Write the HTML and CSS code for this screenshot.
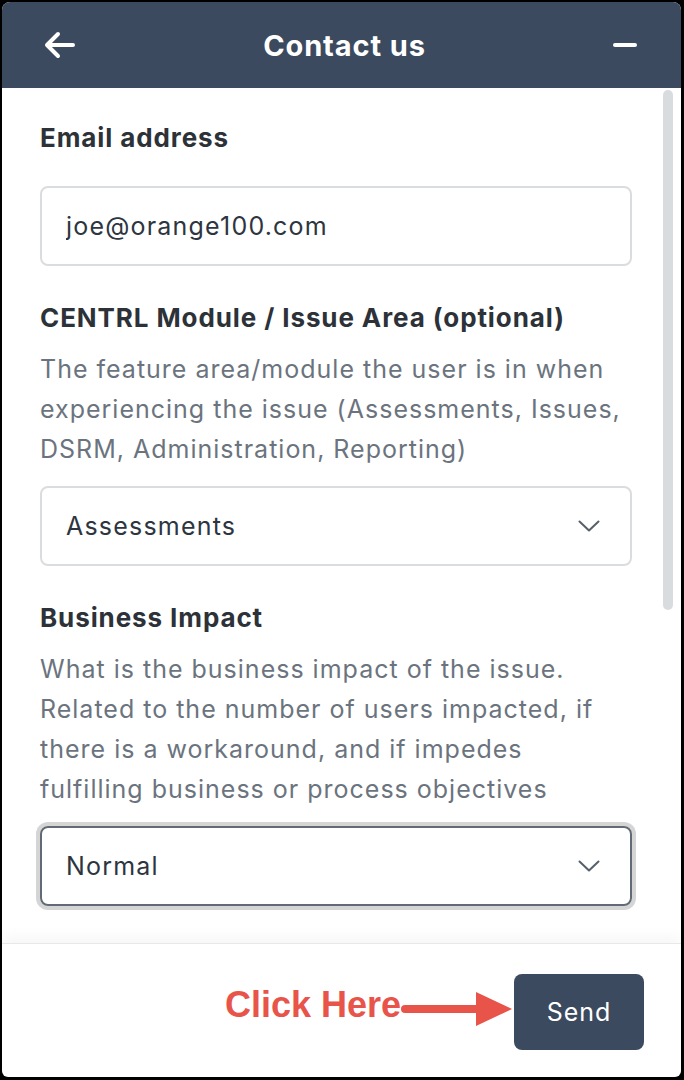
FILE: index.html
```html
<!DOCTYPE html>
<html lang="en">
<head>
    <meta charset="UTF-8">
    <meta name="viewport" content="width=device-width, initial-scale=1.0">
    <title>Contact us</title>
    <link rel="stylesheet" href="styles.css">
</head>
<body>
    <div class="widget">
        <div class="header">
            <button class="icon-btn" aria-label="Back">
                <svg width="32" height="28" viewBox="0 0 32 28">
                    <path d="M29 14H4M14 3L3 14l11 11" fill="none" stroke="#fff" stroke-width="4" stroke-linecap="round" stroke-linejoin="round"/>
                </svg>
            </button>
            <h1 class="title">Contact us</h1>
            <button class="icon-btn" aria-label="Minimize">
                <svg width="24" height="6" viewBox="0 0 24 6">
                    <path d="M2 3h20" fill="none" stroke="#fff" stroke-width="4" stroke-linecap="round"/>
                </svg>
            </button>
        </div>

        <div class="content">
            <div class="field">
                <label class="label spaced" for="email">Email address</label>
                <input class="text-input" id="email" type="text" value="joe@orange100.com">
            </div>

            <div class="field">
                <div class="label">CENTRL Module / Issue Area (optional)</div>
                <p class="hint">The feature area/module the user is in when experiencing the issue (Assessments, Issues, DSRM, Administration, Reporting)</p>
                <div class="select">
                    <span>Assessments</span>
                    <svg width="22" height="12" viewBox="0 0 22 12">
                        <path d="M1.5 1.5l9.5 9 9.5-9" fill="none" stroke="#56606b" stroke-width="2" stroke-linecap="round" stroke-linejoin="round"/>
                    </svg>
                </div>
            </div>

            <div class="field">
                <div class="label">Business Impact</div>
                <p class="hint">What is the business impact of the issue. Related to the number of users impacted, if there is a workaround, and if impedes fulfilling business or process objectives</p>
                <div class="select focused">
                    <span>Normal</span>
                    <svg width="22" height="12" viewBox="0 0 22 12">
                        <path d="M1.5 1.5l9.5 9 9.5-9" fill="none" stroke="#56606b" stroke-width="2" stroke-linecap="round" stroke-linejoin="round"/>
                    </svg>
                </div>
            </div>

            <div class="scroll-thumb"></div>
        </div>

        <div class="footer">
            <div class="callout">
                <span>Click Here</span>
                <svg width="114" height="38" viewBox="0 0 114 38">
                    <path d="M5 19H80" fill="none" stroke="#e8544a" stroke-width="8" stroke-linecap="round"/>
                    <path d="M76 2L112 19 76 36z" fill="#e8544a"/>
                </svg>
            </div>
            <button class="send-btn">Send</button>
        </div>
    </div>
</body>
</html>
```

FILE: styles.css
```css
* {
    box-sizing: border-box;
}

body {
    margin: 0;
    height: 1080px;
    padding: 2px 3px 3px 2px;
    background-color: #000000;
    font-family: Inter, "Noto Sans", sans-serif;
}

.widget {
    height: 100%;
    display: flex;
    flex-direction: column;
    background-color: #ffffff;
    border-radius: 8px 8px 6px 6px;
    overflow: hidden;
}

.header {
    height: 86px;
    flex-shrink: 0;
    display: flex;
    align-items: center;
    justify-content: space-between;
    padding: 0 44px 0 42px;
    background-color: #3c4a60;
}

.icon-btn {
    background: none;
    border: none;
    padding: 0;
    display: flex;
    align-items: center;
    cursor: pointer;
}

.title {
    margin: 0;
    color: #ffffff;
    font-size: 29px;
    font-weight: 700;
    letter-spacing: 0.9px;
}

.content {
    position: relative;
    flex: 1;
    padding: 34px 49px 0 38px;
    overflow: hidden;
}

.field {
    margin-bottom: 36px;
}

.label {
    display: block;
    font-size: 26px;
    line-height: 32px;
    font-weight: 700;
    letter-spacing: 0.9px;
    color: #2c3238;
    margin-bottom: 15px;
}

.label.spaced {
    margin-bottom: 32px;
}

.hint {
    margin: 0 0 17px;
    font-size: 25px;
    line-height: 40px;
    letter-spacing: 1px;
    color: #6b747e;
}

.text-input {
    display: block;
    width: 100%;
    height: 80px;
    padding: 0 24px;
    border: 2px solid #dadde0;
    border-radius: 8px;
    font-family: inherit;
    font-size: 25px;
    letter-spacing: 1.2px;
    color: #2d3540;
    outline: none;
}

.select {
    height: 80px;
    display: flex;
    align-items: center;
    justify-content: space-between;
    padding: 0 30px 0 24px;
    border: 2px solid #dadde0;
    border-radius: 8px;
    font-size: 25px;
    letter-spacing: 1.2px;
    color: #2d3540;
}

.select.focused {
    border-color: #626b75;
    box-shadow: 0 0 0 4px #d5d5d5;
}

.scroll-thumb {
    position: absolute;
    top: 2px;
    right: 8px;
    width: 10px;
    height: 520px;
    border-radius: 5px;
    background-color: #d9dcdf;
}

.footer {
    flex-shrink: 0;
    height: 134px;
    display: flex;
    align-items: center;
    justify-content: flex-end;
    padding: 2px 37px 0;
    border-top: 1px solid #e8e8e8;
    box-shadow: 0 -6px 14px rgba(0, 0, 0, 0.04);
}

.callout {
    display: flex;
    align-items: center;
    margin-bottom: 14px;
    color: #e8544a;
    font-family: "Liberation Sans", Arial, sans-serif;
    font-size: 36px;
    font-weight: 700;
}

.callout svg {
    margin-left: -1px;
    margin-top: 9px;
}

.send-btn {
    width: 130px;
    height: 76px;
    border: none;
    border-radius: 8px;
    background-color: #3c4a60;
    color: #ffffff;
    font-family: inherit;
    font-size: 25px;
    letter-spacing: 1px;
    cursor: pointer;
}
```
